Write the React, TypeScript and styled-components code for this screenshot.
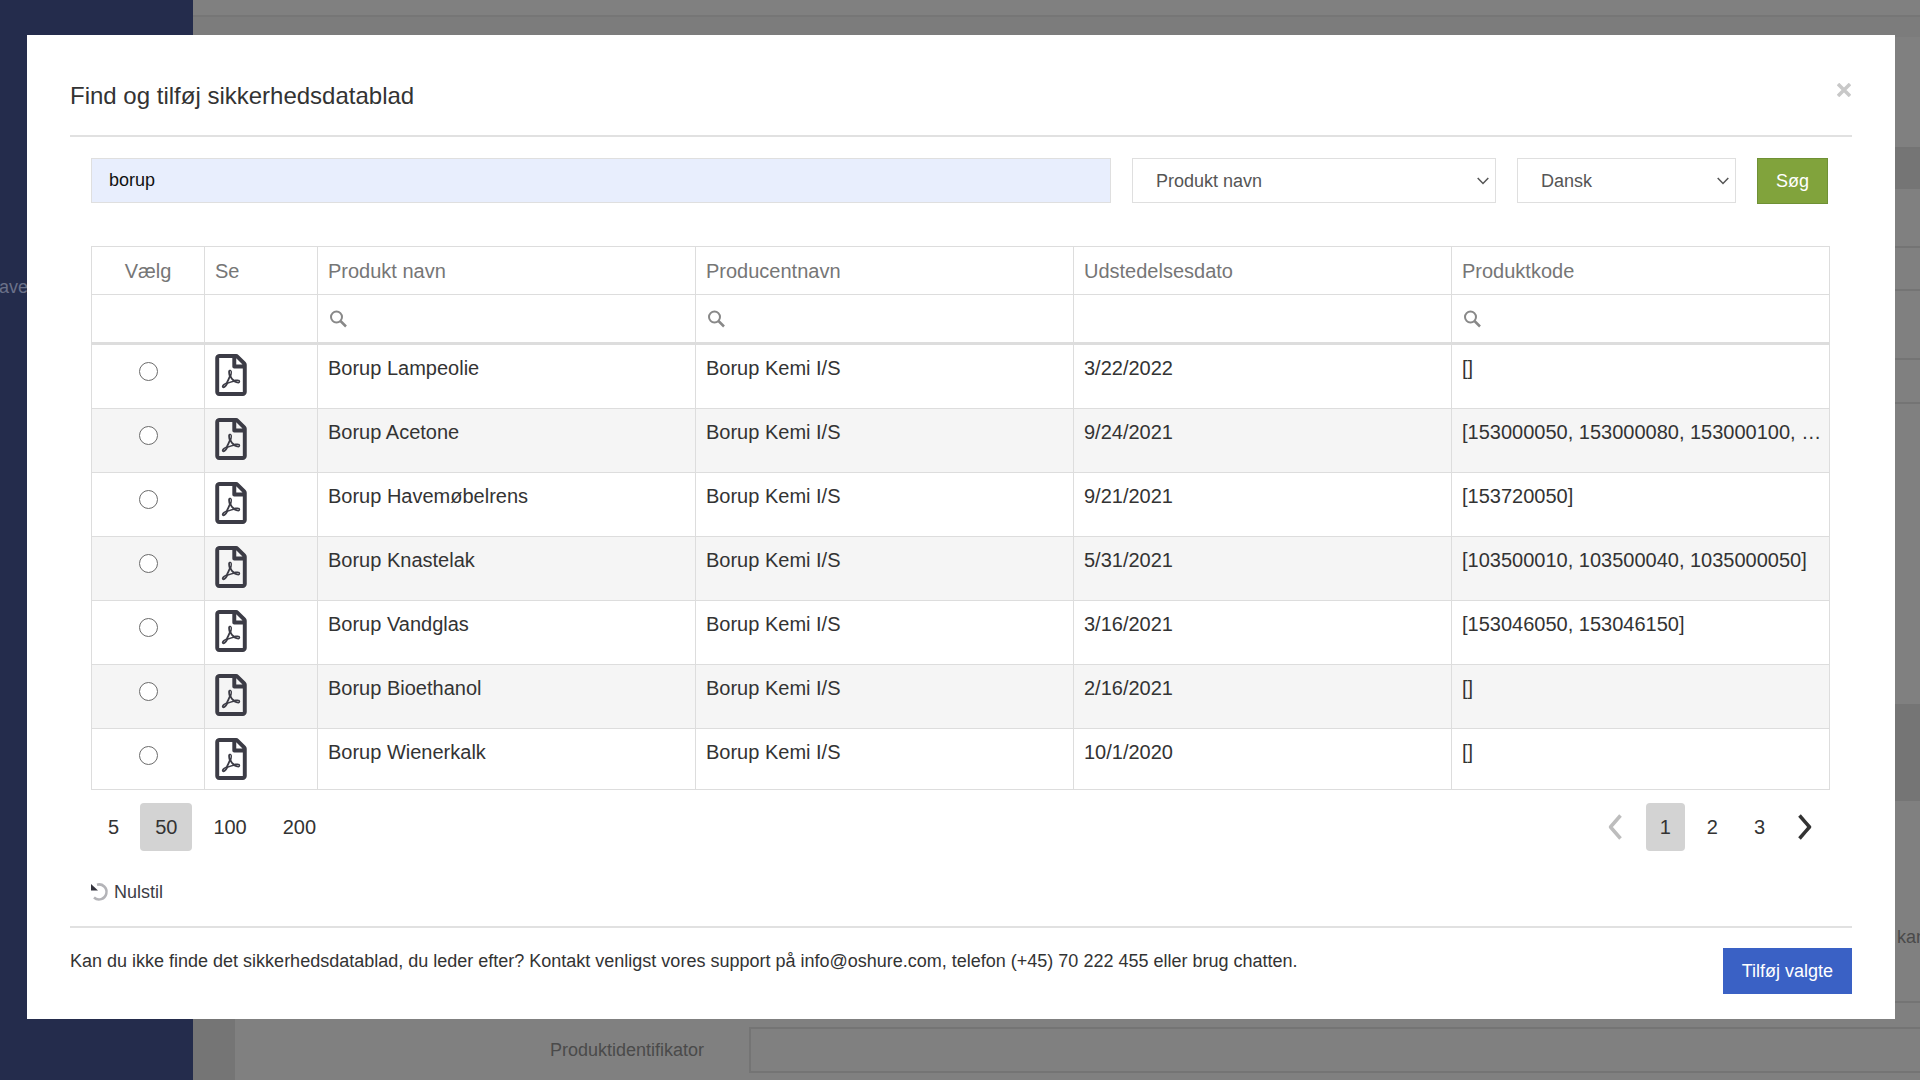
import React, { useState } from "react";
import styled, { createGlobalStyle } from "styled-components";

const GlobalStyle = createGlobalStyle`
  * { box-sizing: border-box; }
  html, body, #root { height: 100%; }
  body {
    margin: 0;
    overflow: hidden;
    background: #808080;
    font-family: "Liberation Sans", Arial, Helvetica, sans-serif;
    font-size: 18px;
    color: #333;
  }
  button, input, select { font: inherit; }
`;

/* Page behind the dialog */
const Page = styled.div`
  display: flex;
  height: 100vh;
  overflow: hidden;
  background: #808080;
`;

const Sidebar = styled.nav`
  flex: 0 0 193px;
  padding-top: 276px;
  background: #242c4c;
  color: #6b7189;
  line-height: 22px;
`;

const SidebarLabel = styled.span`
  display: block;
  width: 28px;
  direction: rtl;
  overflow: hidden;
  white-space: nowrap;
`;

const Content = styled.main`
  flex: 1;
  display: flex;
  flex-direction: column;
  min-width: 0;
`;

const TopBar = styled.div`
  height: 17px;
  border-bottom: 2px solid #767676;
`;

const Breadcrumb = styled.div`
  height: 20px;
  background: #7c7c7c;
`;

const Body = styled.div`
  flex: 1;
  display: flex;
  min-height: 0;
`;

const Gutter = styled.div`
  flex: 0 0 42px;
  background: #757575;
`;

const Sections = styled.div`
  flex: 1;
  min-width: 0;
`;

const Band = styled.div<{ $height: number; $dark?: boolean; $line?: boolean }>`
  height: ${(p) => p.$height}px;
  background: ${(p) => (p.$dark ? "#757575" : "#808080")};
  border-bottom: ${(p) => (p.$line ? "2px solid #747474" : "0")};
`;

const HintBand = styled(Band)`
  display: flex;
  justify-content: flex-end;
  align-items: flex-end;
  padding-bottom: 53px;
  color: #4a4a4a;
  line-height: 22px;
`;

const Hint = styled.span`
  width: 23px;
  white-space: nowrap;
`;

const FieldRow = styled.label`
  display: flex;
  align-items: center;
  padding-left: 315px;
  color: #4a4a4a;
`;

const FieldName = styled.span`
  flex: 0 0 199px;
`;

const BackField = styled.input`
  flex: 1;
  height: 46px;
  border: 2px solid #747474;
  border-right: 0;
  background: #808080;
`;

/* Dialog */
const Dialog = styled.div`
  position: fixed;
  inset: 35px 25px auto 27px;
  display: flex;
  flex-direction: column;
  padding: 43px 43px 25px;
  background: #fff;
`;

const DialogHeader = styled.header`
  display: flex;
  justify-content: space-between;
  align-items: flex-start;
  height: 59px;
  border-bottom: 2px solid #e1e1e1;
`;

const Title = styled.h1`
  margin: 4px 0 0;
  font-size: 24px;
  font-weight: 400;
  line-height: 28px;
`;

const CloseButton = styled.button`
  display: flex;
  padding: 5px 1px;
  border: 0;
  background: none;
`;

const SearchForm = styled.form`
  display: flex;
  align-items: flex-start;
  gap: 21px;
  padding: 21px 24px 0 21px;
`;

const SearchInput = styled.input`
  flex: 1;
  min-width: 0;
  height: 45px;
  padding: 0 17px;
  border: 1px solid #dfdfdf;
  background: #e8eefd;
  color: #111;
`;

const SelectBox = styled.div<{ $width: number }>`
  display: grid;
  grid-template-columns: 1fr 24px;
  align-items: center;
  flex: 0 0 ${(p) => p.$width}px;
  height: 45px;
  border: 1px solid #dfdfdf;

  svg { grid-area: 1 / 2; pointer-events: none; justify-self: center; }
`;

const Select = styled.select`
  grid-area: 1 / 1 / 2 / 3;
  width: 100%;
  height: 43px;
  padding: 0 30px 0 23px;
  border: 0;
  appearance: none;
  background: transparent;
  color: #555;
`;

const SearchButton = styled.button`
  flex: 0 0 71px;
  height: 46px;
  padding: 0;
  border: 1px solid #6f9135;
  background: #81a33c;
  color: #fff;
`;

const GridArea = styled.section`
  padding: 42px 22px 0 21px;
`;

const Table = styled.table`
  width: 100%;
  table-layout: fixed;
  border-collapse: collapse;
  border: 1px solid #ddd;
  font-size: 20px;
  line-height: 24px;
`;

const Head = styled.th<{ $center?: boolean }>`
  height: 48px;
  padding: 0 10px;
  border: 1px solid #ddd;
  color: #767676;
  font-weight: 400;
  text-align: ${(p) => (p.$center ? "center" : "left")};
`;

const FilterCell = styled.td`
  height: 49px;
  padding: 0 10px;
  border: 1px solid #ddd;
  border-bottom: 3px solid #ddd;
`;

const FilterLabel = styled.label`
  display: flex;
  align-items: center;
  gap: 8px;
`;

const FilterInput = styled.input`
  flex: 1;
  min-width: 0;
  border: 0;
  outline: 0;
  background: transparent;
`;

const Row = styled.tr`
  height: 64px;
  &:nth-child(even) { background: #f5f5f5; }
  &:first-child { height: 65px; }
  &:last-child { height: 61px; }
`;

const Cell = styled.td<{ $center?: boolean }>`
  padding: ${(p) => (p.$center ? "11px 0 0" : "11px 4px 0 10px")};
  border: 1px solid #ddd;
  vertical-align: top;
  overflow: hidden;
  text-overflow: ellipsis;
  white-space: nowrap;
  text-align: ${(p) => (p.$center ? "center" : "left")};
`;

const IconCell = styled(Cell)`
  padding-top: 9px;
`;

const Radio = styled.input`
  appearance: none;
  width: 19px;
  height: 19px;
  margin: 6px 0 0 1px;
  border: 1px solid #6b6b6b;
  border-radius: 50%;
  background: #fff;
  &:checked { border: 6px solid #3a61c5; }
`;

const PdfLink = styled.a`
  display: flex;
  color: #3c3c46;
`;

const Pager = styled.div`
  display: flex;
  justify-content: space-between;
  padding: 13px 7px 0 2px;
`;

const PageGroup = styled.div<{ $gap: number }>`
  display: flex;
  align-items: center;
  gap: ${(p) => p.$gap}px;
`;

const PageButton = styled.button<{ $active?: boolean; $pad: number }>`
  height: 48px;
  padding: 0 ${(p) => p.$pad}px;
  border: 0;
  border-radius: 4px;
  background: ${(p) => (p.$active ? "#d3d3d3" : "transparent")};
  color: #333;
  font-size: 20px;
`;

const ArrowButton = styled.button<{ $width: number }>`
  display: flex;
  align-items: center;
  justify-content: center;
  width: ${(p) => p.$width}px;
  height: 48px;
  padding: 0;
  border: 0;
  background: none;
`;

const ResetButton = styled.button`
  display: flex;
  align-items: center;
  gap: 5px;
  margin-top: 29px;
  padding: 0;
  border: 0;
  background: none;
  color: #3c3c46;
  line-height: 24px;
`;

const DialogFooter = styled.footer`
  display: flex;
  justify-content: space-between;
  align-items: flex-start;
  margin-top: 22px;
  padding-top: 20px;
  border-top: 2px solid #e1e1e1;
`;

const Support = styled.p`
  margin: 0;
  line-height: 26px;
`;

const AddButton = styled.button`
  height: 46px;
  padding: 0 18px;
  border: 1px solid #3a61c5;
  background: #3a61c5;
  color: #fff;
`;

const PdfIcon = () => (
  <svg width="32" height="42" viewBox="0 0 384 512" fill="currentColor" aria-hidden="true">
    <path d="M369.9 97.9L286 14C277 5 264.8-.1 252.1-.1H48C21.500 0 0 21.500 0 48v416c0 26.500 21.500 48 48 48h288c26.500 0 48-21.500 48-48V131.900c0-12.700-5.100-25-14.100-34zM332.100 128H256V51.900l76.100 76.100zM48 464V48h160v104c0 13.300 10.700 24 24 24h104v288H48zm250.200-143.700c-12.200-12-47-8.700-64.400-6.500-17.200-10.500-28.700-25-36.800-46.300 3.900-16.100 10.100-40.600 5.400-56-4.200-26.200-37.800-23.600-42.600-5.900-4.400 16.100-.4 38.500 7 67.100-10 23.900-24.900 56-35.400 74.400-20 10.300-47 26.200-51 46.200-3.300 15.800 26 55.200 76.100-31.200 22.400-7.400 46.800-16.500 68.400-20.100 18.900 10.200 41 17 55.800 17 25.500 0 28-28.200 17.500-38.700zm-198.100 77.800c5.100-13.700 24.500-29.500 30.400-35-19 30.300-30.400 35.700-30.400 35zm81.600-190.600c7.400 0 6.700 32.100 1.800 40.800-4.400-13.900-4.300-40.800-1.800-40.800zm-24.400 136.600c9.700-16.900 18-37 24.700-54.700 8.300 15.100 18.900 27.200 30.100 35.500-20.800 4.300-38.900 13.100-54.800 19.200zm131.600-5s-5 6-37.300-7.800c35.100-2.600 40.900 5.400 37.300 7.800z" />
  </svg>
);

const SearchIcon = () => (
  <svg width="20" height="20" viewBox="0 0 20 20" fill="none" stroke="#888" strokeWidth="2" aria-hidden="true">
    <circle cx="8.500" cy="8" r="5.500" />
    <path d="M12.500 12l5.500 5.500" strokeWidth="2.500" />
  </svg>
);

const ChevronDown = () => (
  <svg width="12" height="8" viewBox="0 0 12 8" fill="none" stroke="#555" strokeWidth="1.500" aria-hidden="true">
    <path d="M.7 1L6 6.500 11.300 1" />
  </svg>
);

const Arrow = ({ back }: { back?: boolean }) => (
  <svg width="14" height="26" viewBox="0 0 14 26" fill="none" stroke={back ? "#bdbdbd" : "#333"} strokeWidth="3.500" strokeLinejoin="round" aria-hidden="true">
    <path d={back ? "M12.500 1.500L2.500 13l10 11.500" : "M1.500 1.500L11.500 13l-10 11.500"} />
  </svg>
);

const ResetIcon = () => (
  <svg width="18" height="20" viewBox="0 0 18 20" aria-hidden="true">
    <path d="M6 2.700A7.500 7.500 0 1 1 3 15.500" fill="none" stroke="#b4b4b8" strokeWidth="2.500" />
    <path d="M0 2v6.500h7z" fill="#33333d" />
  </svg>
);

const CloseIcon = () => (
  <svg width="14" height="14" viewBox="0 0 14 14" stroke="#c8c8c8" strokeWidth="3.500" aria-hidden="true">
    <path d="M1 1l12 12M13 1L1 13" />
  </svg>
);

const columns = [
  { name: "Vælg", width: 113, filter: false },
  { name: "Se", width: 113, filter: false },
  { name: "Produkt navn", width: 0, filter: true },
  { name: "Producentnavn", width: 0, filter: true },
  { name: "Udstedelsesdato", width: 0, filter: false },
  { name: "Produktkode", width: 0, filter: true },
];

const products = [
  { name: "Borup Lampeolie", date: "3/22/2022", code: "[]" },
  { name: "Borup Acetone", date: "9/24/2021", code: "[153000050, 153000080, 153000100, …" },
  { name: "Borup Havemøbelrens", date: "9/21/2021", code: "[153720050]" },
  { name: "Borup Knastelak", date: "5/31/2021", code: "[103500010, 103500040, 1035000050]" },
  { name: "Borup Vandglas", date: "3/16/2021", code: "[153046050, 153046150]" },
  { name: "Borup Bioethanol", date: "2/16/2021", code: "[]" },
  { name: "Borup Wienerkalk", date: "10/1/2020", code: "[]" },
];

export default function App() {
  const [query, setQuery] = useState("borup");
  const [size, setSize] = useState(50);
  const [page, setPage] = useState(1);

  return (
    <>
      <GlobalStyle />
      <Page>
        <Sidebar>
          <SidebarLabel>ave</SidebarLabel>
        </Sidebar>
        <Content>
          <TopBar />
          <Breadcrumb />
          <Body>
            <Gutter />
            <Sections>
              <Band $height={112} $line />
              <Band $height={40} $dark />
              <Band $height={59} $line />
              <Band $height={43} $line />
              <Band $height={69} $line />
              <Band $height={44} $line />
              <Band $height={300} />
              <Band $height={97} $dark />
              <HintBand $height={202} $line>
                <Hint>kan</Hint>
              </HintBand>
              <Band $height={24} />
              <FieldRow>
                <FieldName>Produktidentifikator</FieldName>
                <BackField />
              </FieldRow>
            </Sections>
          </Body>
        </Content>
      </Page>

      <Dialog role="dialog" aria-labelledby="dialog-title">
        <DialogHeader>
          <Title id="dialog-title">Find og tilføj sikkerhedsdatablad</Title>
          <CloseButton type="button" aria-label="Luk">
            <CloseIcon />
          </CloseButton>
        </DialogHeader>

        <SearchForm onSubmit={(e) => e.preventDefault()}>
          <SearchInput aria-label="Søgetekst" value={query} onChange={(e) => setQuery(e.target.value)} />
          <SelectBox $width={364}>
            <Select aria-label="Søg i">
              <option>Produkt navn</option>
              <option>Producentnavn</option>
            </Select>
            <ChevronDown />
          </SelectBox>
          <SelectBox $width={219}>
            <Select aria-label="Sprog">
              <option>Dansk</option>
              <option>Engelsk</option>
            </Select>
            <ChevronDown />
          </SelectBox>
          <SearchButton type="submit">Søg</SearchButton>
        </SearchForm>

        <GridArea>
          <Table>
            <colgroup>
              {columns.map((c) => (
                <col key={c.name} width={c.width || undefined} />
              ))}
            </colgroup>
            <thead>
              <tr>
                {columns.map((c, i) => (
                  <Head key={c.name} scope="col" $center={i === 0}>{c.name}</Head>
                ))}
              </tr>
              <tr>
                {columns.map((c) => (
                  <FilterCell key={c.name}>
                    {c.filter && (
                      <FilterLabel>
                        <SearchIcon />
                        <FilterInput aria-label={c.name} />
                      </FilterLabel>
                    )}
                  </FilterCell>
                ))}
              </tr>
            </thead>
            <tbody>
              {products.map((p) => (
                <Row key={p.name}>
                  <Cell $center>
                    <Radio type="radio" name="product" aria-label={p.name} />
                  </Cell>
                  <IconCell>
                    <PdfLink href="#" aria-label={p.name}>
                      <PdfIcon />
                    </PdfLink>
                  </IconCell>
                  <Cell>{p.name}</Cell>
                  <Cell>Borup Kemi I/S</Cell>
                  <Cell>{p.date}</Cell>
                  <Cell>{p.code}</Cell>
                </Row>
              ))}
            </tbody>
          </Table>

          <Pager>
            <PageGroup $gap={6}>
              {[5, 50, 100, 200].map((n) => (
                <PageButton key={n} type="button" $pad={15} $active={n === size} onClick={() => setSize(n)}>
                  {n}
                </PageButton>
              ))}
            </PageGroup>
            <PageGroup $gap={8}>
              <ArrowButton type="button" $width={46} aria-label="Forrige side">
                <Arrow back />
              </ArrowButton>
              {[1, 2, 3].map((n) => (
                <PageButton key={n} type="button" $pad={14} $active={n === page} onClick={() => setPage(n)}>
                  {n}
                </PageButton>
              ))}
              <ArrowButton type="button" $width={36} aria-label="Næste side">
                <Arrow />
              </ArrowButton>
            </PageGroup>
          </Pager>

          <ResetButton type="button">
            <ResetIcon />
            Nulstil
          </ResetButton>
        </GridArea>

        <DialogFooter>
          <Support>
            Kan du ikke finde det sikkerhedsdatablad, du leder efter? Kontakt venligst vores support på info@oshure.com, telefon (+45) 70 222 455 eller brug chatten.
          </Support>
          <AddButton type="button">Tilføj valgte</AddButton>
        </DialogFooter>
      </Dialog>
    </>
  );
}
